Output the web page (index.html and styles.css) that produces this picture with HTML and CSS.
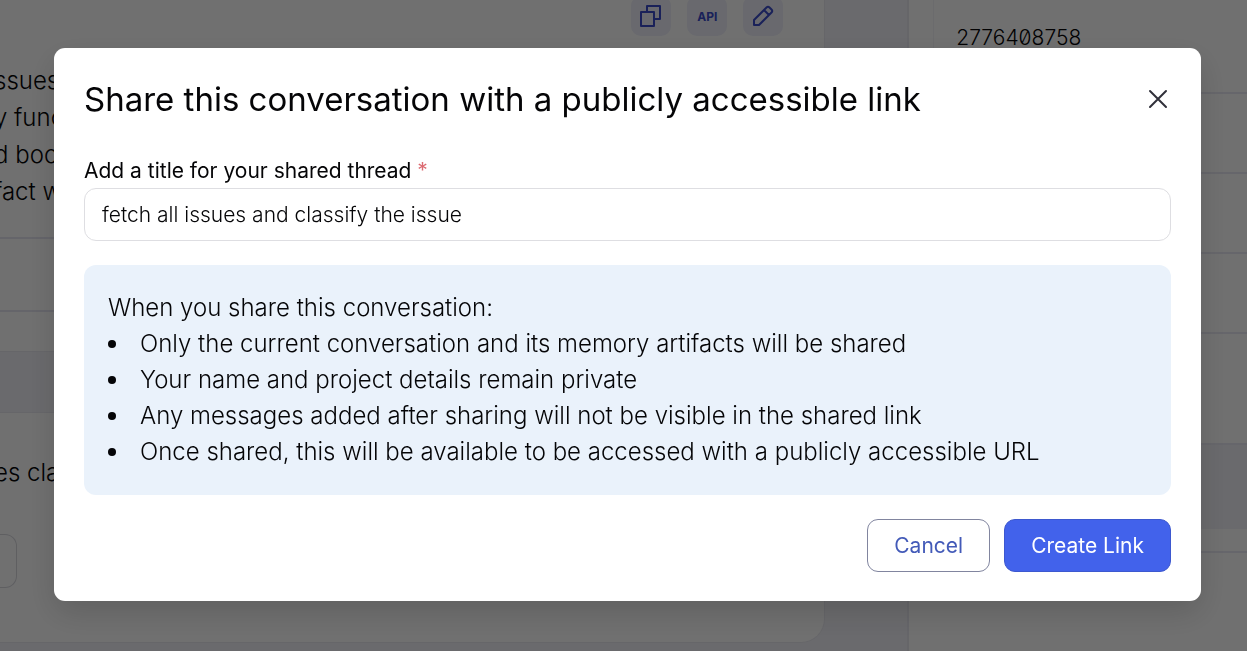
FILE: index.html
```
<!DOCTYPE html>
<html lang="en">
<head>
<meta charset="utf-8">
<meta name="viewport" content="width=device-width, initial-scale=1">
<title>Share conversation</title>
<link rel="stylesheet" href="styles.css">
</head>
<body>
<div class="workspace">
  <main class="chat">
    <section class="message">
      <div class="tools">
        <button class="tool" type="button" aria-label="Copy"><svg width="24" height="24" viewBox="0 0 24 24"><path d="M8 8V2h13v13h-6M2 8h13v14H2z"/></svg></button>
        <button class="tool tool-api" type="button">API</button>
        <button class="tool" type="button" aria-label="Edit"><svg width="24" height="24" viewBox="0 0 24 24"><path d="M3 16 15.500 3.500Q17 2 18.500 3.500l2 2Q22 7 20.500 8.500L8 21H3zM13 6l5 5"/></svg></button>
      </div>
      <p class="prose">ssues<br>y func<br>d boo<br>fact w</p>
      <div class="rule rule-tall"></div>
      <div class="rule rule-short"></div>
    </section>
    <section class="message message-last">
      <p class="prose">es cla</p>
      <div class="stub"></div>
    </section>
  </main>
  <aside class="side">
    <div class="cell cell-id">2776408758</div>
    <div class="cell"></div>
    <div class="cell"></div>
    <div class="cell"></div>
    <div class="cell cell-tall"></div>
    <div class="band"></div>
    <div class="cell cell-short"></div>
  </aside>
</div>
<div class="overlay">
  <form class="dialog" role="dialog" aria-modal="true" aria-labelledby="dialog-title">
    <header class="head">
      <h1 class="title" id="dialog-title">Share this conversation with a publicly accessible link</h1>
      <button class="close" type="button" aria-label="Close"><svg width="20" height="20" viewBox="0 0 20 20"><path d="m2 2 16 16M18 2 2 18"/></svg></button>
    </header>
    <label class="label" for="thread-title">Add a title for your shared thread <span class="required">*</span></label>
    <input class="field" id="thread-title" type="text" value="fetch all issues and classify the issue">
    <div class="notice">
      <p class="lead">When you share this conversation:</p>
      <ul class="list">
        <li>Only the current conversation and its memory artifacts will be shared</li>
        <li>Your name and project details remain private</li>
        <li>Any messages added after sharing will not be visible in the shared link</li>
        <li>Once shared, this will be available to be accessed with a publicly accessible URL</li>
      </ul>
    </div>
    <footer class="actions">
      <button class="button" type="button">Cancel</button>
      <button class="button button-primary" type="submit">Create Link</button>
    </footer>
  </form>
</div>
</body>
</html>
```
FILE: styles.css
```
* { box-sizing: border-box; }
body { margin: 0; font-family: Inter, "Liberation Sans", sans-serif; font-optical-sizing: none; color: #050507; overflow: hidden; }
button, input { font: inherit; font-optical-sizing: none; }
p, h1, ul { margin: 0; padding: 0; }

.workspace { display: grid; grid-template-columns: 826fr 340fr; gap: 82px; height: 100vh; background: #f2f2f8; }
.chat { display: flex; flex-direction: column; gap: 60px; padding-bottom: 8px; }
.message { background: #fff; border: solid #e9e9f0; border-width: 0 1px 1px 0; height: 352px; flex: none; }
.message-last { flex: 1; height: auto; border-top-width: 1px; border-bottom-right-radius: 24px; padding-top: 41px; }
.tools { display: flex; justify-content: flex-end; gap: 16px; padding-right: 41px; height: 62px; }
.tool { width: 40px; height: 40px; margin-top: -4px; padding: 0; display: grid; place-items: center; border: 0; border-radius: 10px; background: #eeeffa; color: #3b4cca; }
.tool svg { fill: none; stroke: currentColor; stroke-width: 2; stroke-linejoin: round; }
.tool-api { font-size: 12px; font-weight: 700; }
.prose { margin-left: -6px; font-size: 24px; line-height: 37px; font-weight: 300; white-space: nowrap; }
.rule { border-bottom: 2px solid #e6e6f2; }
.rule-tall { height: 29px; }
.rule-short { height: 73px; }
.stub { width: 17px; height: 54px; margin-top: 43px; border: solid #d8d8de; border-width: 1px 1px 1px 0; border-radius: 0 12px 12px 0; }

.side { background: #fff; border-left: 2px solid #e8e8f0; }
.cell { height: 80px; margin-left: 24px; border-bottom: 2px solid #e9e9f3; border-left: 1px solid #f4f4f8; }
.cell-id { height: 94px; padding: 24px 0 0 22px; font-size: 21px; line-height: 28px; font-weight: 300; font-feature-settings: "zero"; }
.cell-tall { height: 111px; }
.band { height: 84px; background: #f2f2f8; }
.cell-short { height: 24px; }

.overlay { position: fixed; inset: 0; padding: 48px 46px 50px 54px; background: rgba(0, 0, 0, .56); }
.dialog { padding: 30px 30px 29px; background: #fff; border-radius: 11px; box-shadow: 0 12px 32px rgba(0, 0, 0, .15); }
.head { display: flex; justify-content: space-between; align-items: center; margin-bottom: 37px; }
.title { font-size: 33px; line-height: 42px; font-weight: 400; }
.close { padding: 3px; border: 0; background: none; color: #30303a; display: flex; }
.close svg { fill: none; stroke: currentColor; stroke-width: 2; stroke-linecap: round; }
.label { display: block; font-size: 21px; line-height: 28px; font-weight: 400; margin-bottom: 3px; }
.required { color: #dc6b72; }
.field { display: block; width: 100%; height: 53px; padding: 0 17px; border: 1px solid #dedee2; border-radius: 12px; background: #fff; color: inherit; font-size: 21px; font-weight: 300; outline: 0; }
.notice { margin-top: 24px; padding: 25px 24px; border-radius: 12px; background: #eaf2fb; font-size: 24px; line-height: 36px; font-weight: 300; }
.list { list-style: none; }
.list li { display: flex; align-items: center; gap: 24px; }
.list li::before { content: ""; width: 8px; height: 8px; border-radius: 50%; background: currentColor; flex: none; }
.actions { display: flex; justify-content: flex-end; gap: 14px; margin-top: 24px; }
.button { height: 53px; padding: 0 26px; border: 1px solid #81859f; border-radius: 11px; background: #fff; color: #435ab8; font-size: 21px; font-weight: 400; }
.button-primary { border-color: #3d58cf; background: #4262eb; color: #fff; }
```
